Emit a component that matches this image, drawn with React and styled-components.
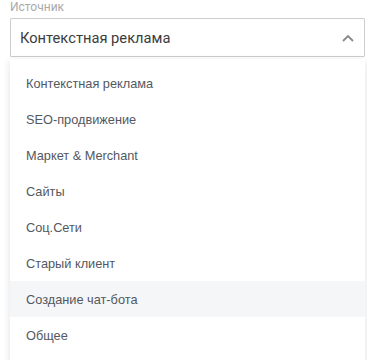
import React from "react";
import styled, { createGlobalStyle } from "styled-components";

const Global = createGlobalStyle`
  html, body { margin: 0; padding: 0; background: #fff; overflow: hidden; }
  body { font-family: Roboto, "Liberation Sans", Arial, sans-serif; }
`;

const Wrap = styled.div`
  padding: 0 2px 0 10px;
  width: 355px;
  height: 360px;
  overflow: hidden;
`;

const Label = styled.div`
  font-size: 12px;
  line-height: 16px;
  margin-top: -1px;
  color: #a9a9a9;
  height: 19px;
`;

const Field = styled.div`
  display: flex;
  align-items: center;
  justify-content: space-between;
  height: 37px;
  border: 1px solid #cdcdcd;
  border-radius: 1px;
  padding: 0 10px 0 9px;
  font-size: 14.7px;
  color: #3c3c3c;
`;

const Panel = styled.div`
  margin-top: 2px;
  background: #fff;
  box-shadow: 0 2px 8px rgba(0, 0, 0, 0.12);
  padding-top: 6px;
  height: 320px;
`;

const Item = styled.div`
  height: 36px;
  display: flex;
  align-items: center;
  padding-left: 16px;
  font-family: "Liberation Sans", Arial, sans-serif;
  font-size: 12.75px;
  color: #53585f;
  background: ${(p) => (p.$active ? "#f5f6f8" : "transparent")};
`;

const items = [
  "Контекстная реклама",
  "SEO-продвижение",
  "Маркет & Merchant",
  "Сайты",
  "Соц.Сети",
  "Старый клиент",
  "Создание чат-бота",
  "Общее",
];

export default function App() {
  return (
    <Wrap>
      <Global />
      <Label>Источник</Label>
      <Field>
        <span>Контекстная реклама</span>
        <svg width="12" height="8" viewBox="0 0 12 8">
          <path d="M1 7 L6 2 L11 7" fill="none" stroke="#8a8a8a" strokeWidth="1.8" />
        </svg>
      </Field>
      <Panel>
        {items.map((t, i) => (
          <Item key={t} $active={i === 6}>{t}</Item>
        ))}
      </Panel>
    </Wrap>
  );
}
